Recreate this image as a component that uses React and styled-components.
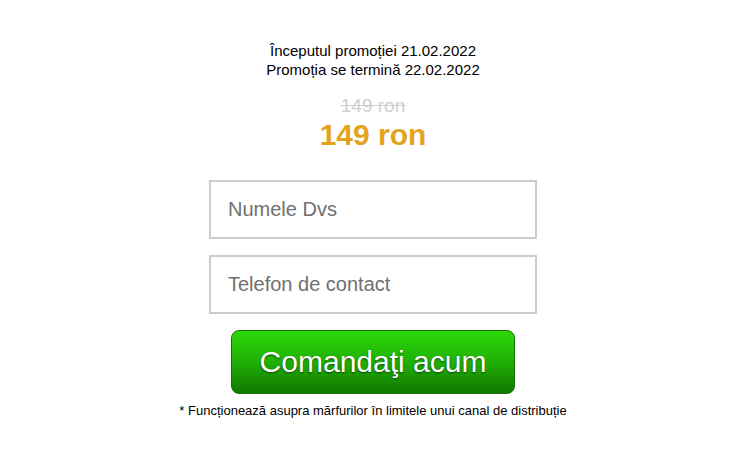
import styled, { createGlobalStyle } from 'styled-components';

const GlobalStyle = createGlobalStyle`
  body {
    margin: 0;
    background: #fff;
    font-family: "Liberation Sans", Arial, sans-serif;
  }
`;

const Page = styled.div`
  display: flex;
  flex-direction: column;
  align-items: center;
  padding-top: 41px;
  padding-right: 7px;
  color: #000;
`;

const Dates = styled.div`
  font-size: 15px;
  line-height: 19px;
  text-align: center;
`;

const OldPrice = styled.div`
  margin-top: 16px;
  font-size: 19px;
  line-height: 22px;
  color: #d0d0d0;
  text-decoration: line-through;
`;

const NewPrice = styled.div`
  margin-top: 1px;
  font-size: 30px;
  line-height: 34px;
  font-weight: bold;
  color: #e4a31c;
`;

const Form = styled.form`
  display: flex;
  flex-direction: column;
  align-items: center;
  gap: 16px;
  margin-top: 28px;
`;

const Field = styled.input`
  box-sizing: border-box;
  width: 328px;
  height: 59px;
  padding: 0 17px;
  border: 2px solid #cccccc;
  font-family: inherit;
  font-size: 20px;
  color: #333;
  outline: none;
  &::placeholder {
    color: #707070;
  }
`;

const Submit = styled.button`
  box-sizing: border-box;
  width: 284px;
  height: 64px;
  border: 1px solid #157005;
  border-radius: 8px;
  background: linear-gradient(to bottom, #2dd80a 0%, #20b006 50%, #117800 100%);
  color: #fff;
  font-family: inherit;
  font-size: 30px;
  text-shadow: 0 1px 2px rgba(0, 0, 0, 0.6);
  cursor: pointer;
`;

const Note = styled.div`
  margin-top: 9px;
  font-size: 13px;
  line-height: 16px;
`;

export default function App() {
  return (
    <>
      <GlobalStyle />
      <Page>
        <Dates>
          <div>Începutul promoției 21.02.2022</div>
          <div>Promoția se termină 22.02.2022</div>
        </Dates>
        <OldPrice>149 ron</OldPrice>
        <NewPrice>149 ron</NewPrice>
        <Form onSubmit={e => e.preventDefault()}>
          <Field type="text" placeholder="Numele Dvs" />
          <Field type="tel" placeholder="Telefon de contact" />
          <Submit type="submit">Comandaţi acum</Submit>
        </Form>
        <Note>* Funcționează asupra mărfurilor în limitele unui canal de distribuție</Note>
      </Page>
    </>
  );
}
